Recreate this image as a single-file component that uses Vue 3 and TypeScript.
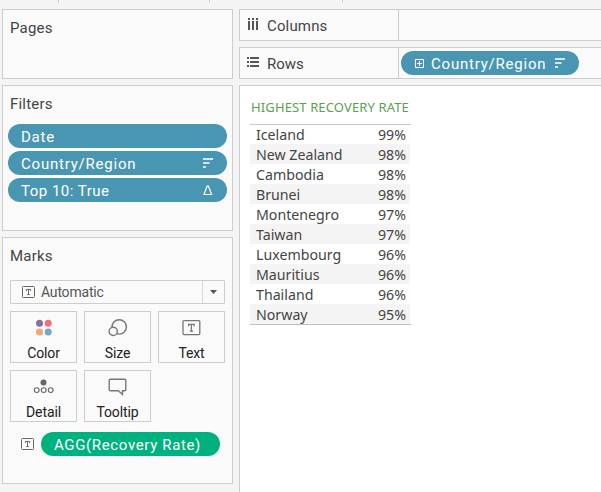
<script setup lang="ts">
interface Row { name: string; rate: string }
interface Filter { label: string; icon: 'sort' | 'delta' | null }

const filters: Filter[] = [
  { label: 'Date', icon: null },
  { label: 'Country/Region', icon: 'sort' },
  { label: 'Top 10: True', icon: 'delta' },
]
const marks: string[] = ['Color', 'Size', 'Text', 'Detail', 'Tooltip']
const rows: Row[] = [
  { name: 'Iceland', rate: '99%' },
  { name: 'New Zealand', rate: '98%' },
  { name: 'Cambodia', rate: '98%' },
  { name: 'Brunei', rate: '98%' },
  { name: 'Montenegro', rate: '97%' },
  { name: 'Taiwan', rate: '97%' },
  { name: 'Luxembourg', rate: '96%' },
  { name: 'Mauritius', rate: '96%' },
  { name: 'Thailand', rate: '96%' },
  { name: 'Norway', rate: '95%' },
]
</script>

<template>
  <div class="app">
    <div class="toolbar-edge"><i /><i /><i /></div>
    <div class="body">
      <aside class="side">
        <section class="panel pages"><h2>Pages</h2></section>

        <section class="panel filters">
          <h2>Filters</h2>
          <div class="pills">
            <div v-for="f in filters" :key="f.label" class="pill">
              <span class="pill-label" :class="{ top: f.icon === 'delta' }">{{ f.label }}</span>
              <svg v-if="f.icon === 'sort'" class="sort" width="11" height="10" viewBox="0 0 11 10">
                <path d="M0 1h10M0 5h6.5M0 9h3" stroke="#fff" stroke-width="1.7" />
              </svg>
              <svg v-if="f.icon === 'delta'" class="delta" width="10" height="11" viewBox="0 0 10 11">
                <path d="M4.1 1h1.3L8.6 9.5H1z" fill="none" stroke="#fff" stroke-width="1.2" />
              </svg>
            </div>
          </div>
        </section>

        <section class="panel marks">
          <h2>Marks</h2>
          <div class="select">
            <svg class="t-small" width="13" height="12" viewBox="0 0 13 12">
              <rect x=".5" y=".5" width="12" height="11" rx="1" fill="none" stroke="#666" />
              <path d="M4.4 5V3.4h4.2V5M6.5 3.4v5.1M5.2 8.6h2.6" fill="none" stroke="#666" />
            </svg>
            <span class="select-label">Automatic</span>
            <span class="arrow">
              <svg width="7" height="4" viewBox="0 0 7 4"><path d="M0 0h7L3.5 4z" fill="#555" /></svg>
            </span>
          </div>
          <div class="cards">
            <div v-for="m in marks" :key="m" class="card">
              <svg width="24" height="20" viewBox="0 0 24 20">
                <template v-if="m === 'Color'">
                  <circle cx="7.5" cy="5.3" r="3.5" fill="#86709c" />
                  <circle cx="16.2" cy="5.3" r="3.5" fill="#ee717b" />
                  <circle cx="7.5" cy="14" r="3.5" fill="#f5a673" />
                  <circle cx="16.2" cy="14" r="3.5" fill="#7aa3cc" />
                </template>
                <g v-else-if="m === 'Size'" fill="#fafafa" stroke="#777" stroke-width="1.4">
                  <circle cx="13.2" cy="8.9" r="7.2" />
                  <circle cx="7.2" cy="13.4" r="4.1" />
                </g>
                <g v-else-if="m === 'Text'" fill="none" stroke="#777" stroke-width="1.3">
                  <rect x="3" y="2.6" width="16.8" height="14" rx="1" />
                  <path d="M8.6 8.3V6.3h5.6v2M11.4 6.3v6.8M9.7 13.1h3.4" />
                </g>
                <template v-else-if="m === 'Detail'">
                  <circle cx="11.5" cy="5.6" r="3" fill="#666" />
                  <g fill="none" stroke="#666" stroke-width="1.1">
                    <circle cx="4.7" cy="13.1" r="2.4" />
                    <circle cx="11.7" cy="13.1" r="2.4" />
                    <circle cx="18.7" cy="13.1" r="2.4" />
                  </g>
                </template>
                <path
                  v-else
                  d="M4.5 2.2h14q1.3 0 1.3 1.3v9q0 1.3-1.3 1.3h-2v3.7l-4.2-3.7h-7.8q-1.3 0-1.3-1.3v-9q0-1.3 1.3-1.3z"
                  fill="none"
                  stroke="#777"
                  stroke-width="1.4"
                />
              </svg>
              <span>{{ m }}</span>
            </div>
          </div>
          <div class="mark-row">
            <svg width="13" height="12" viewBox="0 0 13 12">
              <rect x=".5" y=".5" width="12" height="11" rx="1" fill="none" stroke="#666" />
              <path d="M4.4 5V3.4h4.2V5M6.5 3.4v5.1M5.2 8.6h2.6" fill="none" stroke="#666" />
            </svg>
            <div class="pill green"><span class="pill-label agg">AGG(Recovery Rate)</span></div>
          </div>
        </section>
      </aside>

      <main class="main">
        <div class="shelf">
          <div class="shelf-name">
            <svg width="12" height="12" viewBox="0 0 12 12" fill="#555">
              <path d="M1 0h2v2H1zM1 3h2v9H1zM5 0h2v2H5zM5 3h2v9H5zM9 0h2v2H9zM9 3h2v9H9z" />
            </svg>
            <span class="columns">Columns</span>
          </div>
        </div>
        <div class="shelf">
          <div class="shelf-name">
            <svg width="12" height="12" viewBox="0 0 12 12" fill="#555">
              <path d="M0 1h2v2H0zM3 1h9v2H3zM0 5h2v2H0zM3 5h9v2H3zM0 9h2v2H0zM3 9h9v2H3z" />
            </svg>
            <span>Rows</span>
          </div>
          <div class="pill row-pill">
            <svg class="plus" width="9" height="9" viewBox="0 0 9 9">
              <path d="M.5.5h8v8h-8zM2 4.5h5M4.5 2v5" fill="none" stroke="#fff" />
            </svg>
            <span class="pill-label">Country/Region</span>
            <svg class="sort" width="11" height="10" viewBox="0 0 11 10">
              <path d="M0 1h10M0 5h6.5M0 9h3" stroke="#fff" stroke-width="1.7" />
            </svg>
          </div>
        </div>
        <div class="view">
          <h1>HIGHEST RECOVERY RATE</h1>
          <div class="table">
            <div v-for="r in rows" :key="r.name" class="tr">
              <span>{{ r.name }}</span><span class="rate">{{ r.rate }}</span>
            </div>
          </div>
        </div>
      </main>
    </div>
  </div>
</template>

<style>
body { background: #f4f4f4; overflow: hidden; }
</style>

<style scoped>
* { box-sizing: border-box; }
.app {
  width: 601px; height: 492px; overflow: hidden; background: #f4f4f4;
  font-family: Roboto, "Liberation Sans", sans-serif; color: #444; white-space: nowrap;
}
svg { display: block; flex: none; }
h1, h2 { margin: 0; font-weight: 400; }
.toolbar-edge { height: 9px; display: flex; padding-left: 58px; }
.toolbar-edge i { width: 1px; height: 3px; background: #d0d0d0; margin-right: 150px; }
.toolbar-edge i + i { margin-right: 132px; }
.body { display: flex; height: 483px; }
.side { width: 231px; margin-left: 2px; display: flex; flex-direction: column; gap: 6px; flex: none; }
.panel { border: 1px solid #cdcdcd; background: #fafafa; }
.panel h2 { font-size: 15px; line-height: 18px; padding: 9px 0 0 7px; letter-spacing: .2px; }
.pages { height: 70px; }
.filters { height: 146px; }
.marks { height: 247px; }
.pills { display: flex; flex-direction: column; gap: 3px; padding: 11px 5px 0; }
.pill { height: 24px; border-radius: 12px; background: #4996b2; color: #fff; display: flex; align-items: center; padding: 0 13px; }
.pill-label { font-size: 15px; line-height: 24px; letter-spacing: .78px; padding-top: 1px; }
.pill-label.top { letter-spacing: .5px; }
.pill-label.agg { letter-spacing: .64px; }
.sort { margin-left: auto; }
.delta { margin-left: auto; margin-right: 1px; }
.select { margin: 15px 7px 0; height: 24px; border: 1px solid #cdcdcd; border-radius: 1px; display: flex; align-items: center; padding-left: 11px; }
.select-label { font-size: 14px; margin-left: 6px; letter-spacing: -.2px; color: #555; }
.arrow { margin-left: auto; width: 22px; height: 22px; border-left: 1px solid #d8d8d8; display: flex; align-items: center; justify-content: center; }
.cards { display: grid; grid-template-columns: repeat(3, 67px); gap: 7px; padding: 7px 7px 0; }
.card { height: 52px; border: 1px solid #cdcdcd; display: flex; flex-direction: column; align-items: center; padding-top: 6px; }
.card span { font-size: 14px; line-height: 16px; margin-top: 7px; letter-spacing: -.1px; color: #222; }
.mark-row { display: flex; align-items: center; gap: 7px; padding: 10px 0 0 18px; }
.green { width: 179px; background: #00b180; }
.main { margin-left: 6px; flex: 1; display: flex; flex-direction: column; gap: 6px; min-width: 0; }
.shelf { height: 32px; border: 1px solid #cdcdcd; border-right: 0; background: #fafafa; display: flex; align-items: center; flex: none; }
.shelf-name { width: 159px; height: 30px; border-right: 1px solid #cdcdcd; display: flex; align-items: center; gap: 8px; padding-left: 7px; font-size: 15px; }
.shelf-name svg { margin-top: -2px; }
.shelf-name span { padding-top: 2px; }
.columns { letter-spacing: .15px; }
.row-pill { width: 178px; margin-left: 2px; padding-left: 14px; }
.plus { margin-right: 7px; }
.view { flex: 1; background: #fff; border: 1px solid #cdcdcd; border-width: 1px 0 0 1px; padding: 11px 0 0 10px; }
.view h1 { font: 400 13px/20px "Noto Sans", sans-serif; letter-spacing: .13px; color: #59a14f; padding-left: 1px; }
.table { width: 161px; margin-top: 7px; border-bottom: 1px solid #bfbfbf; box-shadow: inset 0 1px #c8c8c8; font: 14.2px/20px "Noto Sans", sans-serif; color: #444; }
.tr { display: flex; justify-content: space-between; width: 160px; height: 20px; padding: 1px 4px 0 6px; }
.tr:nth-child(even) { background: #f4f4f4; }
</style>
